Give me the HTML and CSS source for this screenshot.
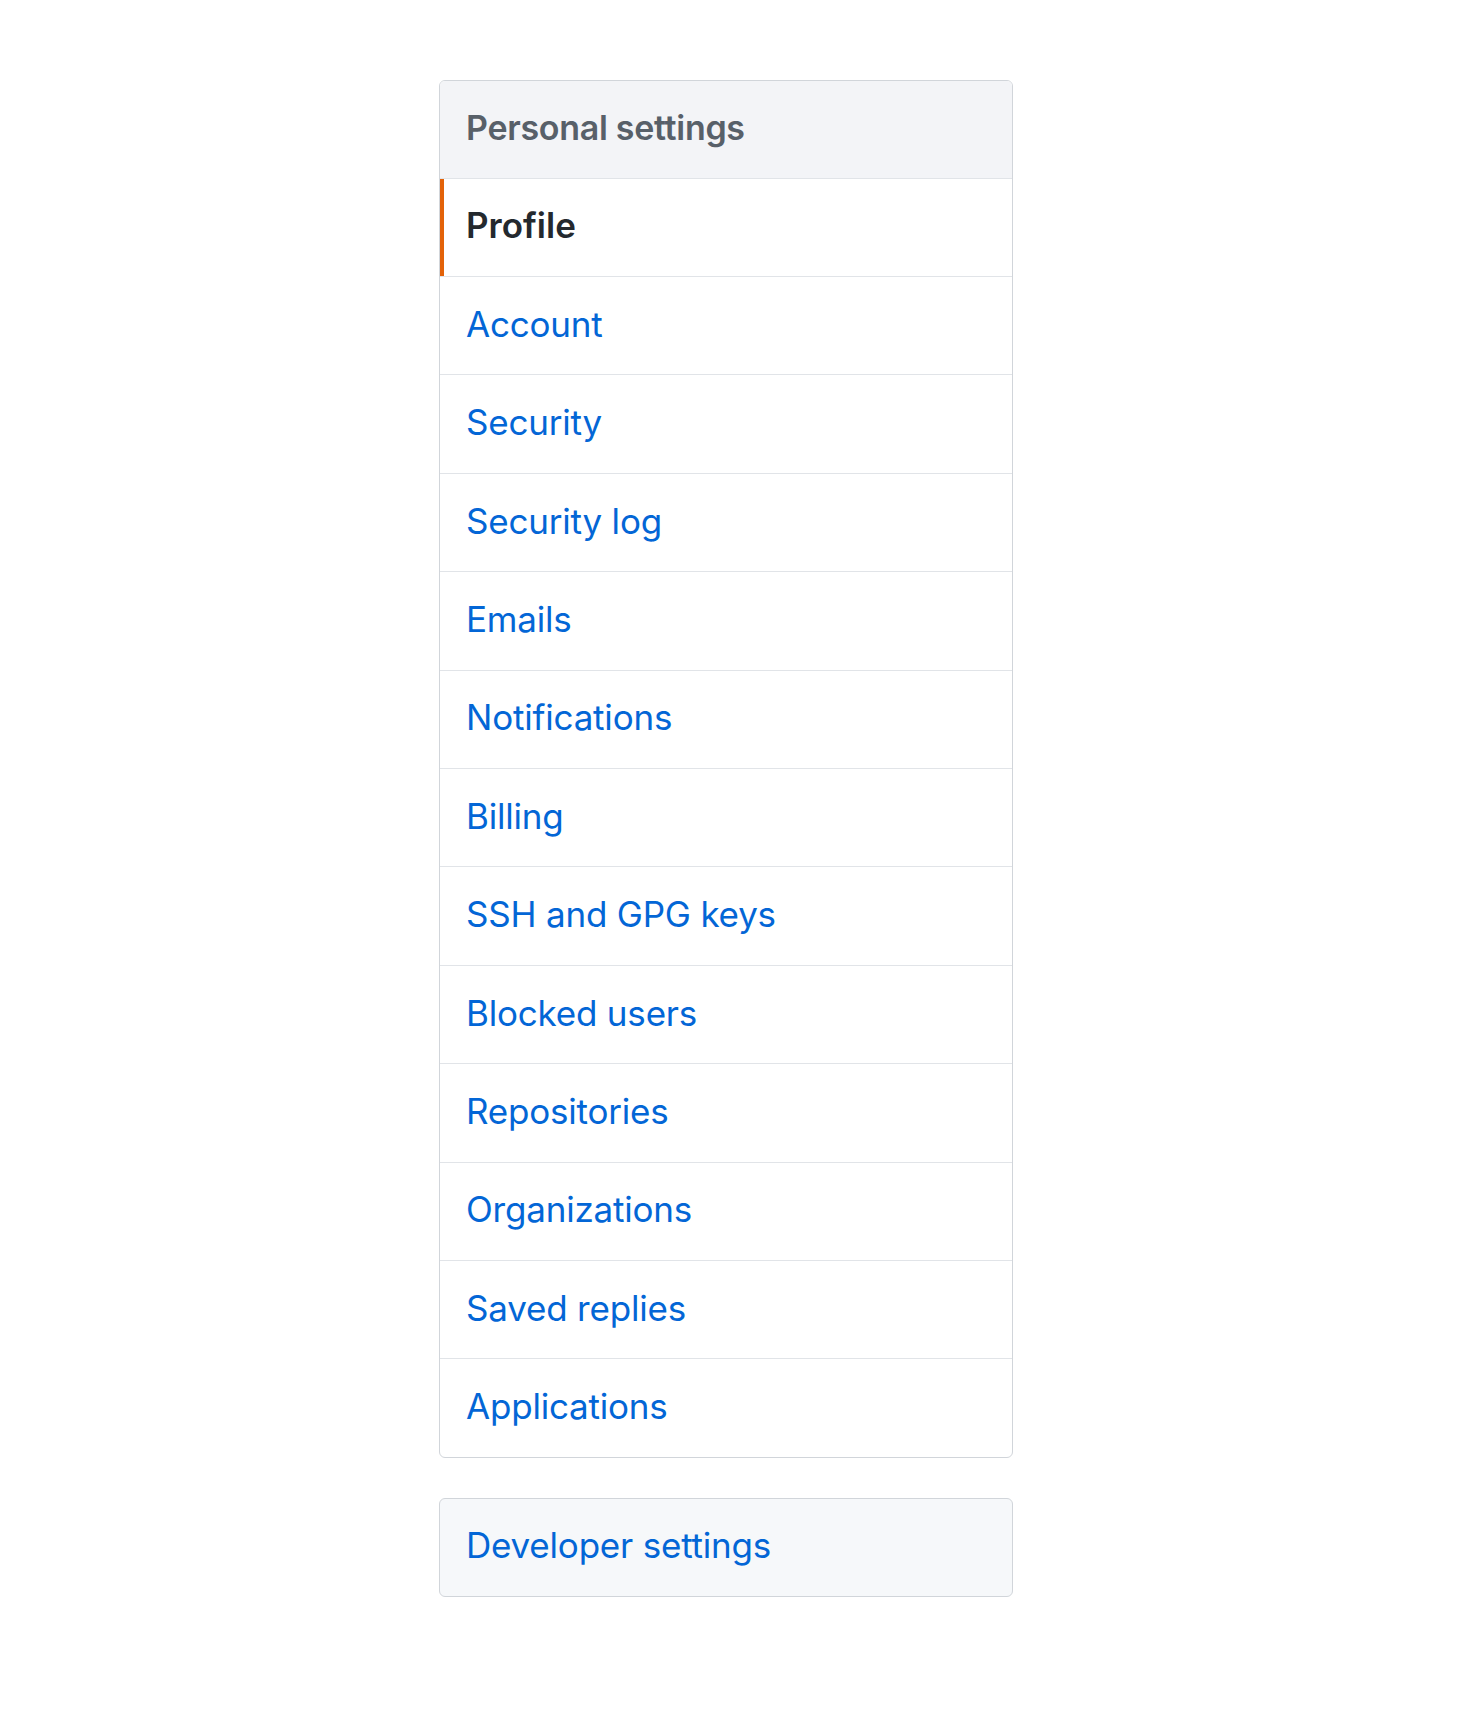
FILE: index.html
```html
<!DOCTYPE html>
<html lang="en">
<head>
<meta charset="utf-8">
<title>Personal settings</title>
<link rel="stylesheet" href="styles.css">
</head>
<body>
<div class="page">
  <nav class="menu">
    <h3 class="menu-heading">Personal settings</h3>
    <a class="menu-item selected" href="#">Profile</a>
    <a class="menu-item" href="#">Account</a>
    <a class="menu-item" href="#">Security</a>
    <a class="menu-item" href="#">Security log</a>
    <a class="menu-item" href="#">Emails</a>
    <a class="menu-item" href="#">Notifications</a>
    <a class="menu-item" href="#">Billing</a>
    <a class="menu-item" href="#">SSH and GPG keys</a>
    <a class="menu-item" href="#">Blocked users</a>
    <a class="menu-item" href="#">Repositories</a>
    <a class="menu-item" href="#">Organizations</a>
    <a class="menu-item" href="#">Saved replies</a>
    <a class="menu-item" href="#">Applications</a>
  </nav>
  <nav class="menu menu-dev">
    <a class="menu-item dev-item" href="#">Developer settings</a>
  </nav>
</div>
</body>
</html>
```

FILE: styles.css
```css
html, body {
  margin: 0;
  padding: 0;
  background: #ffffff;
}

body {
  font-family: Inter, "Liberation Sans", Arial, sans-serif;
  -webkit-font-smoothing: antialiased;
}

.page {
  padding: 80px 0 0 439px;
  display: flex;
  flex-direction: column;
  gap: 40px;
}

.menu {
  width: 574px;
  box-sizing: border-box;
  border: 1px solid #d1d5da;
  border-radius: 6px;
  overflow: hidden;
  display: flex;
  flex-direction: column;
  background: #ffffff;
}

.menu-heading {
  margin: 0;
  box-sizing: border-box;
  height: 96.7px;
  display: flex;
  align-items: center;
  padding: 0 26px 3px;
  background: #f3f4f7;
  color: #586069;
  font-size: 34px;
  font-weight: 600;
  letter-spacing: -0.3px;
}

.menu-item {
  position: relative;
  box-sizing: border-box;
  display: flex;
  align-items: center;
  height: 98.4px;
  padding: 0 26px 4px;
  border-top: 1px solid #e1e4e8;
  color: #0366d6;
  text-decoration: none;
  font-size: 35px;
  font-weight: 400;
  letter-spacing: -0.2px;
}

.menu-item.selected {
  color: #24292e;
  font-weight: 600;
  letter-spacing: 0;
}

.menu-item.selected::before {
  content: "";
  position: absolute;
  left: 0;
  top: 0;
  bottom: 0;
  width: 4px;
  background: #e36209;
}

.menu-dev {
  background: #f6f8fa;
}

.dev-item {
  border-top: none;
  height: 97px;
}
```
